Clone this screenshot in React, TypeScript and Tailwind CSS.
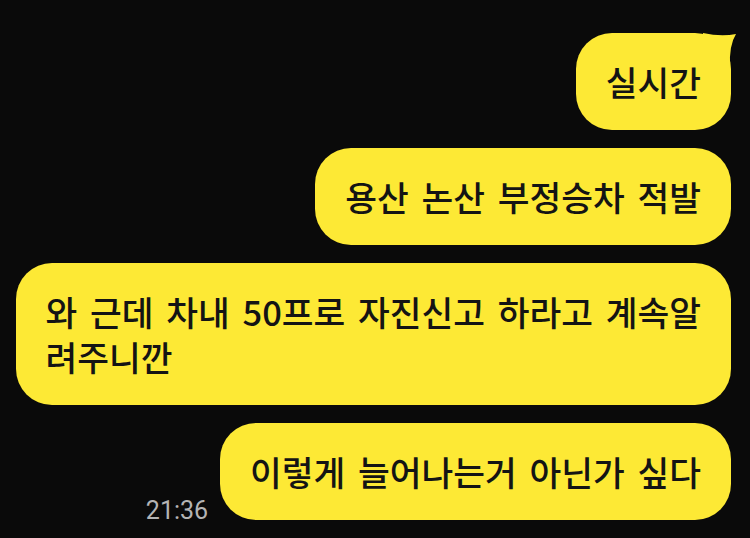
const MESSAGES = [
  { id: 1, lines: ["실시간"], tail: true },
  { id: 2, lines: ["용산 논산 부정승차 적발"] },
  { id: 3, lines: ["와 근데 차내 50프로 자진신고 하라고 계속알", "려주니깐"] },
  { id: 4, lines: ["이렇게 늘어나는거 아닌가 싶다"], time: "21:36" },
];

function Bubble({ lines, tail }: { lines: string[]; tail?: boolean }) {
  return (
    <div className="relative rounded-[36px] bg-[#fde935] px-[30px] py-[26px] text-[34.5px] font-medium leading-[45px] text-[#141414] whitespace-nowrap [word-spacing:5px]">
      {tail ? (
        <svg viewBox="0 0 34 34" className="absolute right-[-6px] top-0 h-[34px] w-[34px]">
          <path d="M0 0 Q18 4 33 1 Q26 12 27 34 L0 34 Z" fill="#fde935" />
        </svg>
      ) : null}
      {lines.map((line, i) => (
        <div key={i} className="relative">{line}</div>
      ))}
    </div>
  );
}

export default function App() {
  return (
    <div
      className="flex h-[538px] w-[750px] flex-col items-end gap-[18px] overflow-hidden bg-[#0a0a0a] pr-[19px] pt-[33px]"
      style={{ fontFamily: '"Noto Sans CJK KR", "Noto Sans", sans-serif' }}
    >
      {MESSAGES.map((m) => (
        <div key={m.id} className="flex items-end gap-[12px]">
          {m.time ? (
            <span className="mb-[-3px] font-['Roboto',sans-serif] text-[25px] leading-none text-[#b4b4b4]">
              {m.time}
            </span>
          ) : null}
          <Bubble lines={m.lines} tail={m.tail} />
        </div>
      ))}
    </div>
  );
}
